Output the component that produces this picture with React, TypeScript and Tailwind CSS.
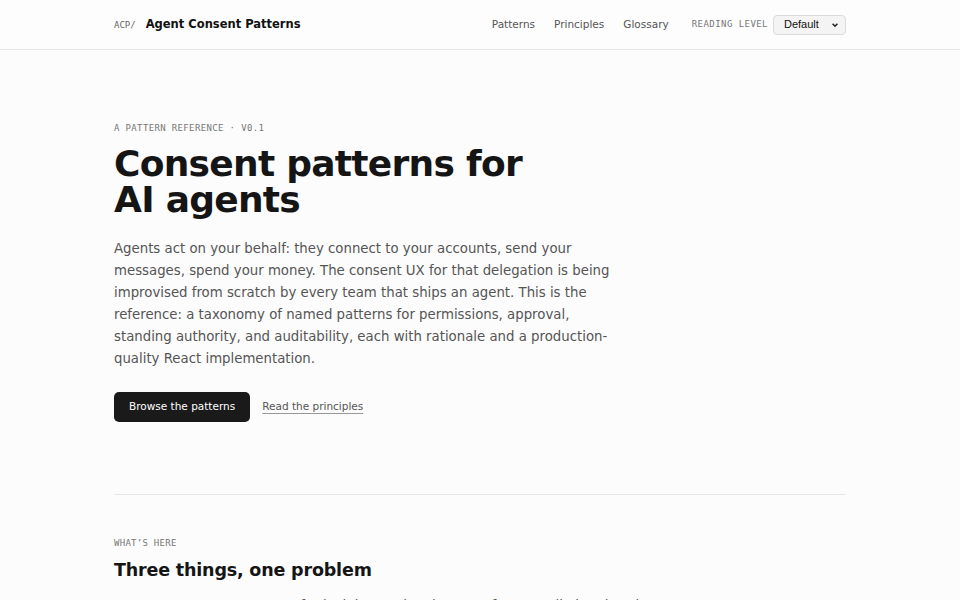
import React from "react";

export default function App() {
  return (
    <div className="min-h-screen bg-[#fcfcfc] text-[#1a1a1a] font-['DejaVu_Sans',sans-serif]">
      <header className="border-b border-[#e6e6e6] bg-[#fdfdfd]">
        <div className="mx-auto flex h-[49px] max-w-[732px] items-center justify-between">
          <div className="flex items-baseline gap-[10px]">
            <span className="font-['DejaVu_Sans_Mono',monospace] text-[9px] text-[#666]">ACP/</span>
            <span className="text-[11.5px] font-bold text-[#111]">Agent Consent Patterns</span>
          </div>
          <div className="flex items-center">
            <nav className="flex items-center gap-[19px] text-[10.5px] text-[#555]">
              <a>Patterns</a>
              <a>Principles</a>
              <a>Glossary</a>
            </nav>
            <span className="ml-[23px] font-['DejaVu_Sans_Mono',monospace] text-[9px] tracking-[0.05em] text-[#777]">
              READING LEVEL
            </span>
            <div className="ml-[5px] flex h-[20px] w-[73px] items-center justify-between rounded-[4px] border border-[#dcdcdc] bg-[#f4f4f4] pl-[10px] pr-[6px] font-['Liberation_Sans',sans-serif] text-[11px] text-[#111]">
              <span>Default</span>
              <svg width="8" height="8" viewBox="0 0 10 10" fill="none" stroke="#222" strokeWidth="2">
                <path d="M2 3.5 L5 6.5 L8 3.5" />
              </svg>
            </div>
          </div>
        </div>
      </header>

      <main className="mx-auto max-w-[732px]">
        <section className="pt-[72px] pb-[72px]">
          <p className="font-['DejaVu_Sans_Mono',monospace] text-[9px] tracking-[0.04em] text-[#777]">
            A PATTERN REFERENCE · V0.1
          </p>
          <h1 className="mt-[10px] text-[36px] font-bold leading-[36px] tracking-[-0.02em] text-[#151515]">
            Consent patterns for
            <br />
            AI agents
          </h1>
          <p className="mt-[20px] max-w-[508px] text-[13.3px] leading-[22px] text-[#555]">
            Agents act on your behalf: they connect to your accounts, send your messages, spend your money. The consent UX
            for that delegation is being improvised from scratch by every team that ships an agent. This is the
            reference: a taxonomy of named patterns for permissions, approval, standing authority, and auditability, each
            with rationale and a production-quality React implementation.
          </p>
          <div className="mt-[22px] flex items-center gap-[12px]">
            <button className="h-[30px] rounded-[5px] bg-[#1a1a1a] px-[15px] text-[10.5px] text-white">
              Browse the patterns
            </button>
            <a className="text-[10.5px] text-[#555] underline underline-offset-[3px] decoration-[#999]">
              Read the principles
            </a>
          </div>
        </section>
        <div className="border-t border-[#e6e6e6]" />
        <section className="pt-[42px]">
          <p className="font-['DejaVu_Sans_Mono',monospace] text-[9px] tracking-[0.03em] text-[#777]">WHAT’S HERE</p>
          <h2 className="mt-[7px] text-[17.5px] font-bold tracking-[-0.01em] text-[#151515]">Three things, one problem</h2>
          <p className="mt-[12px] max-w-[600px] text-[13.3px] leading-[22px] text-[#555]">
            A pattern taxonomy, a set of principles, and a glossary of terms, all aimed at the same question: how a person
            stays in control of an agent that acts for them.
          </p>
        </section>
      </main>
    </div>
  );
}
